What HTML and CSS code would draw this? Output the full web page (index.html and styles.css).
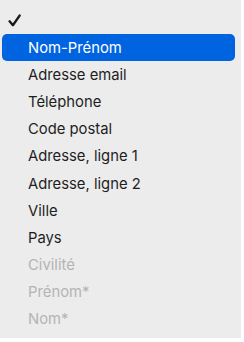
FILE: index.html
```html
<!DOCTYPE html>
<html lang="fr">
<head>
<meta charset="utf-8">
<link rel="stylesheet" href="styles.css">
</head>
<body>
<div class="menu">
  <div class="row check-row">
    <svg class="check" width="13" height="13" viewBox="0 0 13 13"><path d="M1.6 7.3 L4.9 11.2 L11.6 1.6" fill="none" stroke="#1a1a1a" stroke-width="2.4" stroke-linecap="round" stroke-linejoin="round"/></svg>
  </div>
  <div class="row selected">Nom-Prénom</div>
  <div class="row">Adresse email</div>
  <div class="row">Téléphone</div>
  <div class="row">Code postal</div>
  <div class="row">Adresse, ligne 1</div>
  <div class="row">Adresse, ligne 2</div>
  <div class="row">Ville</div>
  <div class="row">Pays</div>
  <div class="row disabled">Civilité</div>
  <div class="row disabled">Prénom*</div>
  <div class="row disabled">Nom*</div>
</div>
</body>
</html>
```
FILE: styles.css
```css
html, body {
  margin: 0;
  padding: 0;
  background: #ffffff;
}
.menu {
  width: 241px;
  height: 338px;
  box-sizing: border-box;
  background: #ececec;
  padding-top: 6px;
  display: flex;
  flex-direction: column;
  font-family: Inter, "Noto Sans", sans-serif;
  font-size: 14.8px;
  color: #1e1e1e;
}
.row {
  height: 27.2px;
  display: flex;
  align-items: center;
  margin: 0 6px 0 2px;
  padding-left: 26px;
  box-sizing: border-box;
  flex-shrink: 0;
}
.check-row {
  height: 28px;
  padding-left: 6px;
}
.check {
  display: block;
}
.selected {
  background: #0064e1;
  color: #ffffff;
  border-radius: 5px;
}
.disabled {
  color: #b4b4b4;
}
```
